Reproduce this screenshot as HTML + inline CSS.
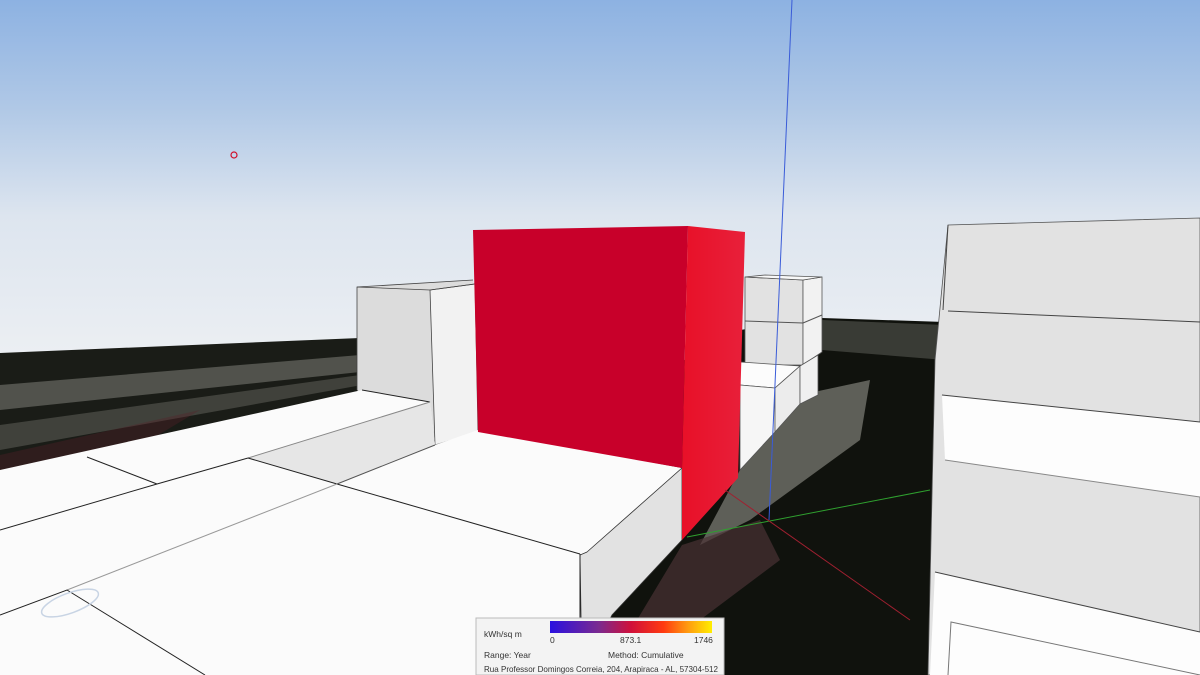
<!DOCTYPE html>
<html><head><meta charset="utf-8"><style>
html,body{margin:0;padding:0;width:1200px;height:675px;overflow:hidden;font-family:"Liberation Sans",sans-serif;background:#10120d}
</style></head><body>
<svg width="1200" height="675" viewBox="0 0 1200 675" xmlns="http://www.w3.org/2000/svg" style="position:absolute;left:0;top:0">
<defs>
<linearGradient id="sky" x1="0" y1="0" x2="0" y2="1">
<stop offset="0" stop-color="#8db2e2"/><stop offset="0.3" stop-color="#b0c8e6"/><stop offset="0.6" stop-color="#dde5ef"/><stop offset="1" stop-color="#eceff3"/>
</linearGradient>
<linearGradient id="leg" x1="0" y1="0" x2="1" y2="0">
<stop offset="0" stop-color="#2a10e0"/><stop offset="0.3" stop-color="#7a2a90"/><stop offset="0.5" stop-color="#d0103a"/><stop offset="0.7" stop-color="#ff3a10"/><stop offset="0.85" stop-color="#ff9a10"/><stop offset="1" stop-color="#ffee00"/>
</linearGradient>
<linearGradient id="rside" x1="0" y1="0" x2="1" y2="0">
<stop offset="0" stop-color="#e81028"/><stop offset="1" stop-color="#e8203a"/>
</linearGradient>
</defs>
<rect width="1200" height="360" fill="url(#sky)"/>
<!-- left ground -->
<polygon points="0,353 360,338 362,390 0,470" fill="#1a1c17"/>
<polygon points="0,385 360,355 360,372 0,410" fill="#5f605a" opacity="0.8"/>
<polygon points="0,425 360,375 362,385 0,450" fill="#4a4b45" opacity="0.8"/>
<polygon points="0,455 200,410 150,440 0,470" fill="#5a2028" opacity="0.35"/>
<!-- right ground -->
<polygon points="740,330 822,318 945,322 945,675 582,675 612,615 682,540 738,478" fill="#10120d"/>
<polygon points="822,320 945,325 945,360 822,350" fill="#4c4d47" opacity="0.7"/>
<polygon points="800,395 870,380 860,440 750,520 700,545 740,470" fill="#5e5f58"/>
<polygon points="682,545 760,520 780,560 700,620 625,640" fill="#4a3234" opacity="0.7"/>
<!-- back right boxes -->
<polygon points="745,277 803,280 803,365 745,365" fill="#e2e2e2" stroke="#555" stroke-width="0.8"/>
<polygon points="803,280 822,277 822,352 803,365" fill="#f2f2f2" stroke="#555" stroke-width="0.8"/>
<polygon points="745,277 803,280 822,277 765,275" fill="#f8f8f8" stroke="#555" stroke-width="0.8"/>
<line x1="745" y1="321" x2="803" y2="323" stroke="#555"/>
<line x1="803" y1="323" x2="822" y2="315" stroke="#555"/>
<polygon points="740,362 800,366 775,388 740,385" fill="#fcfcfc" stroke="#555" stroke-width="0.8"/>
<polygon points="740,385 775,388 775,432 740,470" fill="#f6f6f6" stroke="#555" stroke-width="0.8"/>
<polygon points="775,388 800,366 800,404 775,432" fill="#ececec" stroke="#555" stroke-width="0.8"/>
<polygon points="800,366 818,355 818,395 800,404" fill="#f0f0f0" stroke="#555" stroke-width="0.8"/>
<!-- grey building left -->
<polygon points="357,287 473,280 476,430 430,445 357,390" fill="#dcdcdc"/>
<polygon points="430,290 475,284 478,432 435,445" fill="#f2f2f2" stroke="#444" stroke-width="0.8"/>
<polyline points="357,390 357,287 430,290 475,284" fill="none" stroke="#444" stroke-width="0.8"/>
<line x1="357" y1="287" x2="473" y2="280" stroke="#444" stroke-width="0.8"/>
<!-- big white lower-left -->
<polygon points="0,470 362,390 430,402 435,445 478,430 682,468 680,540 612,615 580,675 0,675" fill="#fbfbfb"/>
<polygon points="248,458 430,402 435,445 337,484" fill="#e6e6e6"/>
<polygon points="587,552 682,468 682,540 612,615 582,675 580,555" fill="#e2e2e2" stroke="#333" stroke-width="0.8"/>
<g stroke="#222" stroke-width="1" fill="none">
<polyline points="362,390 430,402"/>
<polyline points="0,530 157,484 248,458"/>
<polyline points="87,457 157,484"/>
<polyline points="248,458 430,402" stroke="#888"/>
<polyline points="248,458 337,484 580,554"/>
<polyline points="435,445 337,484" stroke="#555"/>
<polyline points="337,484 67,590" stroke="#999"/>
<polyline points="0,615 67,590 205,675"/>
<polyline points="580,554 580,675"/>
</g>
<ellipse cx="70" cy="603" rx="30" ry="10" fill="none" stroke="#c8d4e4" stroke-width="1.5" transform="rotate(-20 70 603)"/>
<!-- red block -->
<polygon points="473,230 688,226 682,468 478,432" fill="#c8002a"/>
<polygon points="688,226 745,232 738,478 682,540 682,468" fill="url(#rside)"/>
<!-- right buildings -->
<polygon points="948,225 1200,218 1200,675 928,675 935,360" fill="#e2e2e2" stroke="#555" stroke-width="0.8"/>
<polygon points="942,395 1200,422 1200,497 945,460" fill="#fdfdfd"/>
<polygon points="935,572 1200,632 1200,675 930,675" fill="#fdfdfd"/>
<g stroke="#444" stroke-width="1" fill="none">
<line x1="948" y1="311" x2="1200" y2="322"/>
<line x1="942" y1="395" x2="1200" y2="422"/>
<line x1="945" y1="460" x2="1200" y2="497" stroke="#888"/>
<line x1="935" y1="572" x2="1200" y2="632"/>
<polyline points="948,675 951,622 1200,675" stroke="#777"/>
<line x1="948" y1="225" x2="943" y2="310"/>
</g>
<!-- axes -->
<line x1="792" y1="0" x2="769" y2="520" stroke="#3a5cd8" stroke-width="1"/>
<line x1="687" y1="537" x2="930" y2="490" stroke="#2fa02f" stroke-width="1"/>
<line x1="725" y1="490" x2="910" y2="620" stroke="#a02030" stroke-width="1"/>
<circle cx="234" cy="155" r="3" fill="none" stroke="#d0102a" stroke-width="1.2"/>
<!-- legend -->
<rect x="476" y="618" width="248" height="57" fill="#f3f3f3" stroke="#bbb"/>
<rect x="550" y="621" width="162" height="12" fill="url(#leg)"/>
<g font-family="Liberation Sans, sans-serif" font-size="8.5" fill="#333">
<text x="484" y="637">kWh/sq m</text>
<text x="550" y="643">0</text>
<text x="620" y="643">873.1</text>
<text x="694" y="643">1746</text>
<text x="484" y="658">Range: Year</text>
<text x="608" y="658">Method: Cumulative</text>
<text x="484" y="672" textLength="234" lengthAdjust="spacingAndGlyphs">Rua Professor Domingos Correia, 204, Arapiraca - AL, 57304-512</text>
</g>
</svg>
</body></html>
